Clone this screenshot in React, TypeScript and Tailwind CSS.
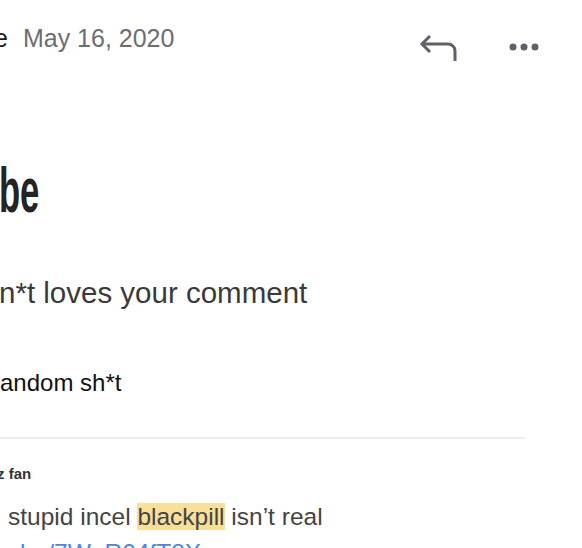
import React from 'react';

// text that runs off the left edge of the viewport: prefix sits in a right-aligned gutter
const Cut = ({ gutter, prefix, children }: { gutter: string; prefix: string; children: React.ReactNode }) => (
  <>
    <span className={`${gutter} shrink-0 text-right`}>{prefix}</span>
    {children}
  </>
);

const ReplyIcon = () => (
  <svg width="40" height="30" viewBox="0 0 40 30" fill="none" stroke="#5f6166" strokeWidth="3">
    <path d="M12 3 L4 11 L12 19" />
    <path d="M4 11 H30 A7 7 0 0 1 37 18 V28" />
  </svg>
);

const DotsIcon = () => (
  <svg width="32" height="10" viewBox="0 0 32 10" fill="#5f6166">
    <circle cx="5" cy="5" r="3.5" />
    <circle cx="16" cy="5" r="3.5" />
    <circle cx="27" cy="5" r="3.5" />
  </svg>
);

const App = () => {
  return (
    <div className="w-[582px] h-[548px] overflow-hidden bg-white font-['Liberation_Sans',Arial,sans-serif]">
      {/* Header */}
      <header className="flex items-start pt-[22px]">
        <div className="flex -ml-[400px] whitespace-nowrap text-[25px] leading-[32px] text-[#1c1c1e]">
          <Cut gutter="w-[394px]" prefix="YouTub">
            <span>e</span>
          </Cut>
          <span className="ml-[15px] text-[#6d6d72]">May 16, 2020</span>
        </div>
        <div className="ml-auto mr-[42px] mt-[11px] flex items-start gap-[50px]">
          <ReplyIcon />
          <div className="mt-[9px]">
            <DotsIcon />
          </div>
        </div>
      </header>

      {/* Body */}
      <main className="mr-[57px]">
        <h1 className="mt-[96px] flex -ml-[400px] origin-[400px_50%] scale-x-[0.55] whitespace-nowrap text-[63px] font-bold leading-[63px] text-[#242424]">
          <Cut gutter="w-[398px]" prefix="YouTu">
            <span>be</span>
          </Cut>
        </h1>

        <p className="mt-[53px] flex -ml-[400px] whitespace-nowrap text-[29.5px] leading-[36px] text-[#3a3a3a]">
          <Cut gutter="w-[399px]" prefix="Someone who ca">
            <span>n*t loves your comment</span>
          </Cut>
        </p>

        <p className="mt-[56px] flex -ml-[400px] whitespace-nowrap text-[24px] leading-[32px] text-[#111]">
          <Cut gutter="w-[400px]" prefix="R">
            <span>andom sh*t</span>
          </Cut>
        </p>

        <div className="mt-[38px] h-[2px] bg-[#ececec]" />

        <div className="mt-[25px] flex -ml-[400px] whitespace-nowrap text-[15px] font-bold leading-[20px] text-[#333]">
          <Cut gutter="w-[397px]" prefix="Jaz">
            <span>z fan</span>
          </Cut>
        </div>

        <div className="mt-[18px] flex -ml-[400px] whitespace-nowrap text-[24.5px] leading-[30px] text-[#444]">
          <Cut gutter="w-[400px]" prefix="The">
            <span className="ml-[8px]">
              stupid incel <span className="bg-[#f8e09b]">blackpill</span> isn’t real
            </span>
          </Cut>
        </div>
        <div className="mt-[6px] flex -ml-[400px] whitespace-nowrap text-[24.5px] leading-[30px] text-[#4a84e6]">
          <Cut gutter="w-[420px]" prefix="https://youtu.">
            <span>be/7W_R04fT8X</span>
          </Cut>
        </div>
      </main>
    </div>
  );
};

export default App;
